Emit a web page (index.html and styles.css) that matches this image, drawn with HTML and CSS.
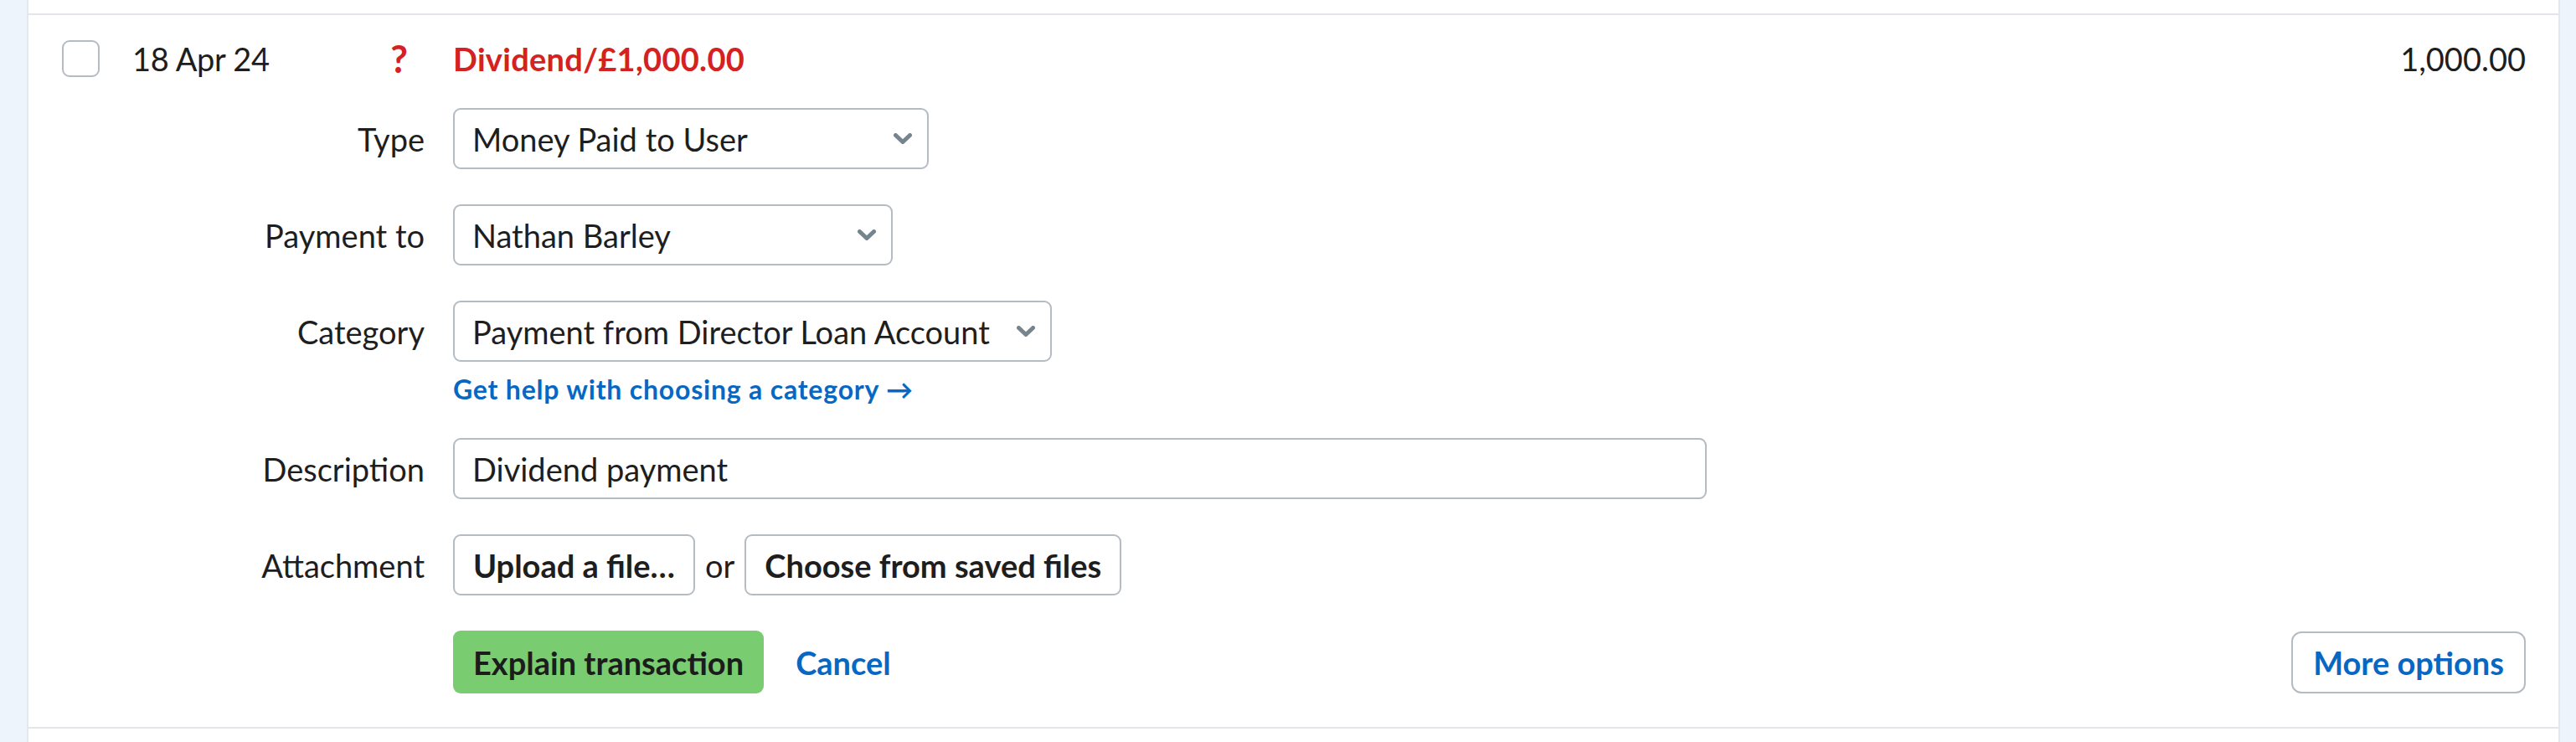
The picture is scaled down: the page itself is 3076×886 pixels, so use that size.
FILE: index.html
```html
<!DOCTYPE html>
<html lang="en">
<head>
<meta charset="utf-8">
<title>Explain transaction</title>
<link rel="stylesheet" href="styles.css">
</head>
<body>
<div class="page">
  <div class="panel">
    <div class="stub"></div>
    <div class="txn">
      <div class="txn-head">
        <div class="head-left">
          <span class="checkbox"></span>
          <span class="date">18 Apr 24</span>
          <span class="unexplained">?</span>
        </div>
        <div class="head-right">
          <span class="txn-desc">Dividend/£1,000.00</span>
          <span class="amount">1,000.00</span>
        </div>
      </div>
      <div class="fields">
        <div class="label">Type</div>
        <div class="control">
          <div class="select select-type"><span>Money Paid to User</span><svg class="chev" viewBox="0 0 22 13" width="22" height="13"><polyline points="2.5,2.5 11,10.5 19.5,2.5"/></svg></div>
        </div>

        <div class="label">Payment to</div>
        <div class="control">
          <div class="select select-user"><span>Nathan Barley</span><svg class="chev" viewBox="0 0 22 13" width="22" height="13"><polyline points="2.5,2.5 11,10.5 19.5,2.5"/></svg></div>
        </div>

        <div class="label">Category</div>
        <div class="control control-stack">
          <div class="select select-cat"><span>Payment from Director Loan Account</span><svg class="chev" viewBox="0 0 22 13" width="22" height="13"><polyline points="2.5,2.5 11,10.5 19.5,2.5"/></svg></div>
          <a class="help-link" href="#">Get help with choosing a category →</a>
        </div>

        <div class="label">Description</div>
        <div class="control">
          <div class="input input-desc">Dividend payment</div>
        </div>

        <div class="label">Attachment</div>
        <div class="control control-attach">
          <span class="btn">Upload a file…</span>
          <span class="or">or</span>
          <span class="btn">Choose from saved files</span>
        </div>

        <div class="label label-empty"></div>
        <div class="control control-actions">
          <span class="btn-primary">Explain transaction</span>
          <a class="cancel" href="#">Cancel</a>
          <span class="btn btn-more">More options</span>
        </div>
      </div>
    </div>
    <div class="stub"></div>
  </div>
</div>
</body>
</html>
```

FILE: styles.css
```css
* { box-sizing: border-box; }

html, body {
  margin: 0;
  padding: 0;
}

body {
  width: 3076px;
  height: 886px;
  overflow: hidden;
  background: #eef4fc;
  font-family: Lato, "Liberation Sans", sans-serif;
  color: #1e1e1e;
  font-size: 38px;
}

.page {
  padding: 0 19px 0 32px;
  height: 886px;
}

.panel {
  background: #ffffff;
  border-left: 2px solid #e3e8ef;
  border-right: 2px solid #e3e8ef;
  height: 886px;
}

.stub {
  height: 16px;
}

.txn {
  border-top: 2px solid #e2e6eb;
  border-bottom: 2px solid #e2e6eb;
  padding: 30px 39px 40px 40px;
}

.txn-head {
  display: grid;
  grid-template-columns: 433px 1fr;
  column-gap: 34px;
  height: 44px;
  align-items: center;
}

.head-left {
  display: flex;
  align-items: center;
  height: 44px;
}

.checkbox {
  width: 45px;
  height: 44px;
  border: 2px solid #b5bbc2;
  border-radius: 9px;
  background: #fff;
  flex: none;
}

.date {
  margin-left: 39px;
  line-height: 44px;
  letter-spacing: -0.3px;
}

.unexplained {
  margin-left: auto;
  margin-right: 20px;
  color: #d42121;
  font-size: 45px;
  font-weight: 700;
  line-height: 44px;
}

.head-right {
  display: flex;
  justify-content: space-between;
  align-items: center;
  line-height: 44px;
}

.txn-desc {
  color: #d42121;
  font-weight: 700;
  letter-spacing: 0.3px;
}

.amount {
  color: #1e1e1e;
}

.fields {
  display: grid;
  grid-template-columns: 433px 1fr;
  column-gap: 34px;
  row-gap: 42px;
  margin-top: 37px;
}

.label {
  height: 73px;
  display: flex;
  align-items: center;
  justify-content: flex-end;
  align-self: start;
  color: #1e1e1e;
}

.label-empty {
  height: 75px;
}

.control {
  display: flex;
  align-items: center;
}

.control-stack {
  flex-direction: column;
  align-items: flex-start;
}

.select,
.input {
  height: 73px;
  border: 2px solid #b4bbc2;
  border-radius: 9px;
  background: #fff;
  display: flex;
  align-items: center;
  padding: 0 18px 0 21px;
  color: #1e1e1e;
}

.select {
  justify-content: space-between;
}

.select-type { width: 568px; }
.select-user { width: 525px; }
.select-cat { width: 715px; }
.input-desc { width: 1497px; }

.chev {
  flex: none;
  fill: none;
  stroke: #76848e;
  stroke-width: 5;
  stroke-linecap: round;
  stroke-linejoin: round;
}

.help-link {
  margin-top: 16px;
  height: 33px;
  line-height: 33px;
  font-size: 32px;
  font-weight: 700;
  letter-spacing: 0.8px;
  color: #0768c4;
  text-decoration: none;
  white-space: nowrap;
}

.control-attach {
  gap: 12px;
}

.btn {
  height: 73px;
  border: 2px solid #b4bbc2;
  border-radius: 9px;
  background: #fff;
  display: inline-flex;
  align-items: center;
  padding: 0 22px;
  font-weight: 700;
  color: #1e1e1e;
  white-space: nowrap;
}

.or {
  color: #1e1e1e;
}

.control-actions {
  height: 75px;
}

.btn-primary {
  height: 75px;
  background: #79cc6f;
  border-radius: 9px;
  display: inline-flex;
  align-items: center;
  padding: 0 24px;
  font-weight: 700;
  color: #1c1c1c;
  white-space: nowrap;
}

.cancel {
  margin-left: 38px;
  font-weight: 700;
  color: #0768c4;
  text-decoration: none;
}

.btn-more {
  margin-left: auto;
  height: 74px;
  border-radius: 12px;
  color: #0768c4;
  padding: 0 24px;
}
```
